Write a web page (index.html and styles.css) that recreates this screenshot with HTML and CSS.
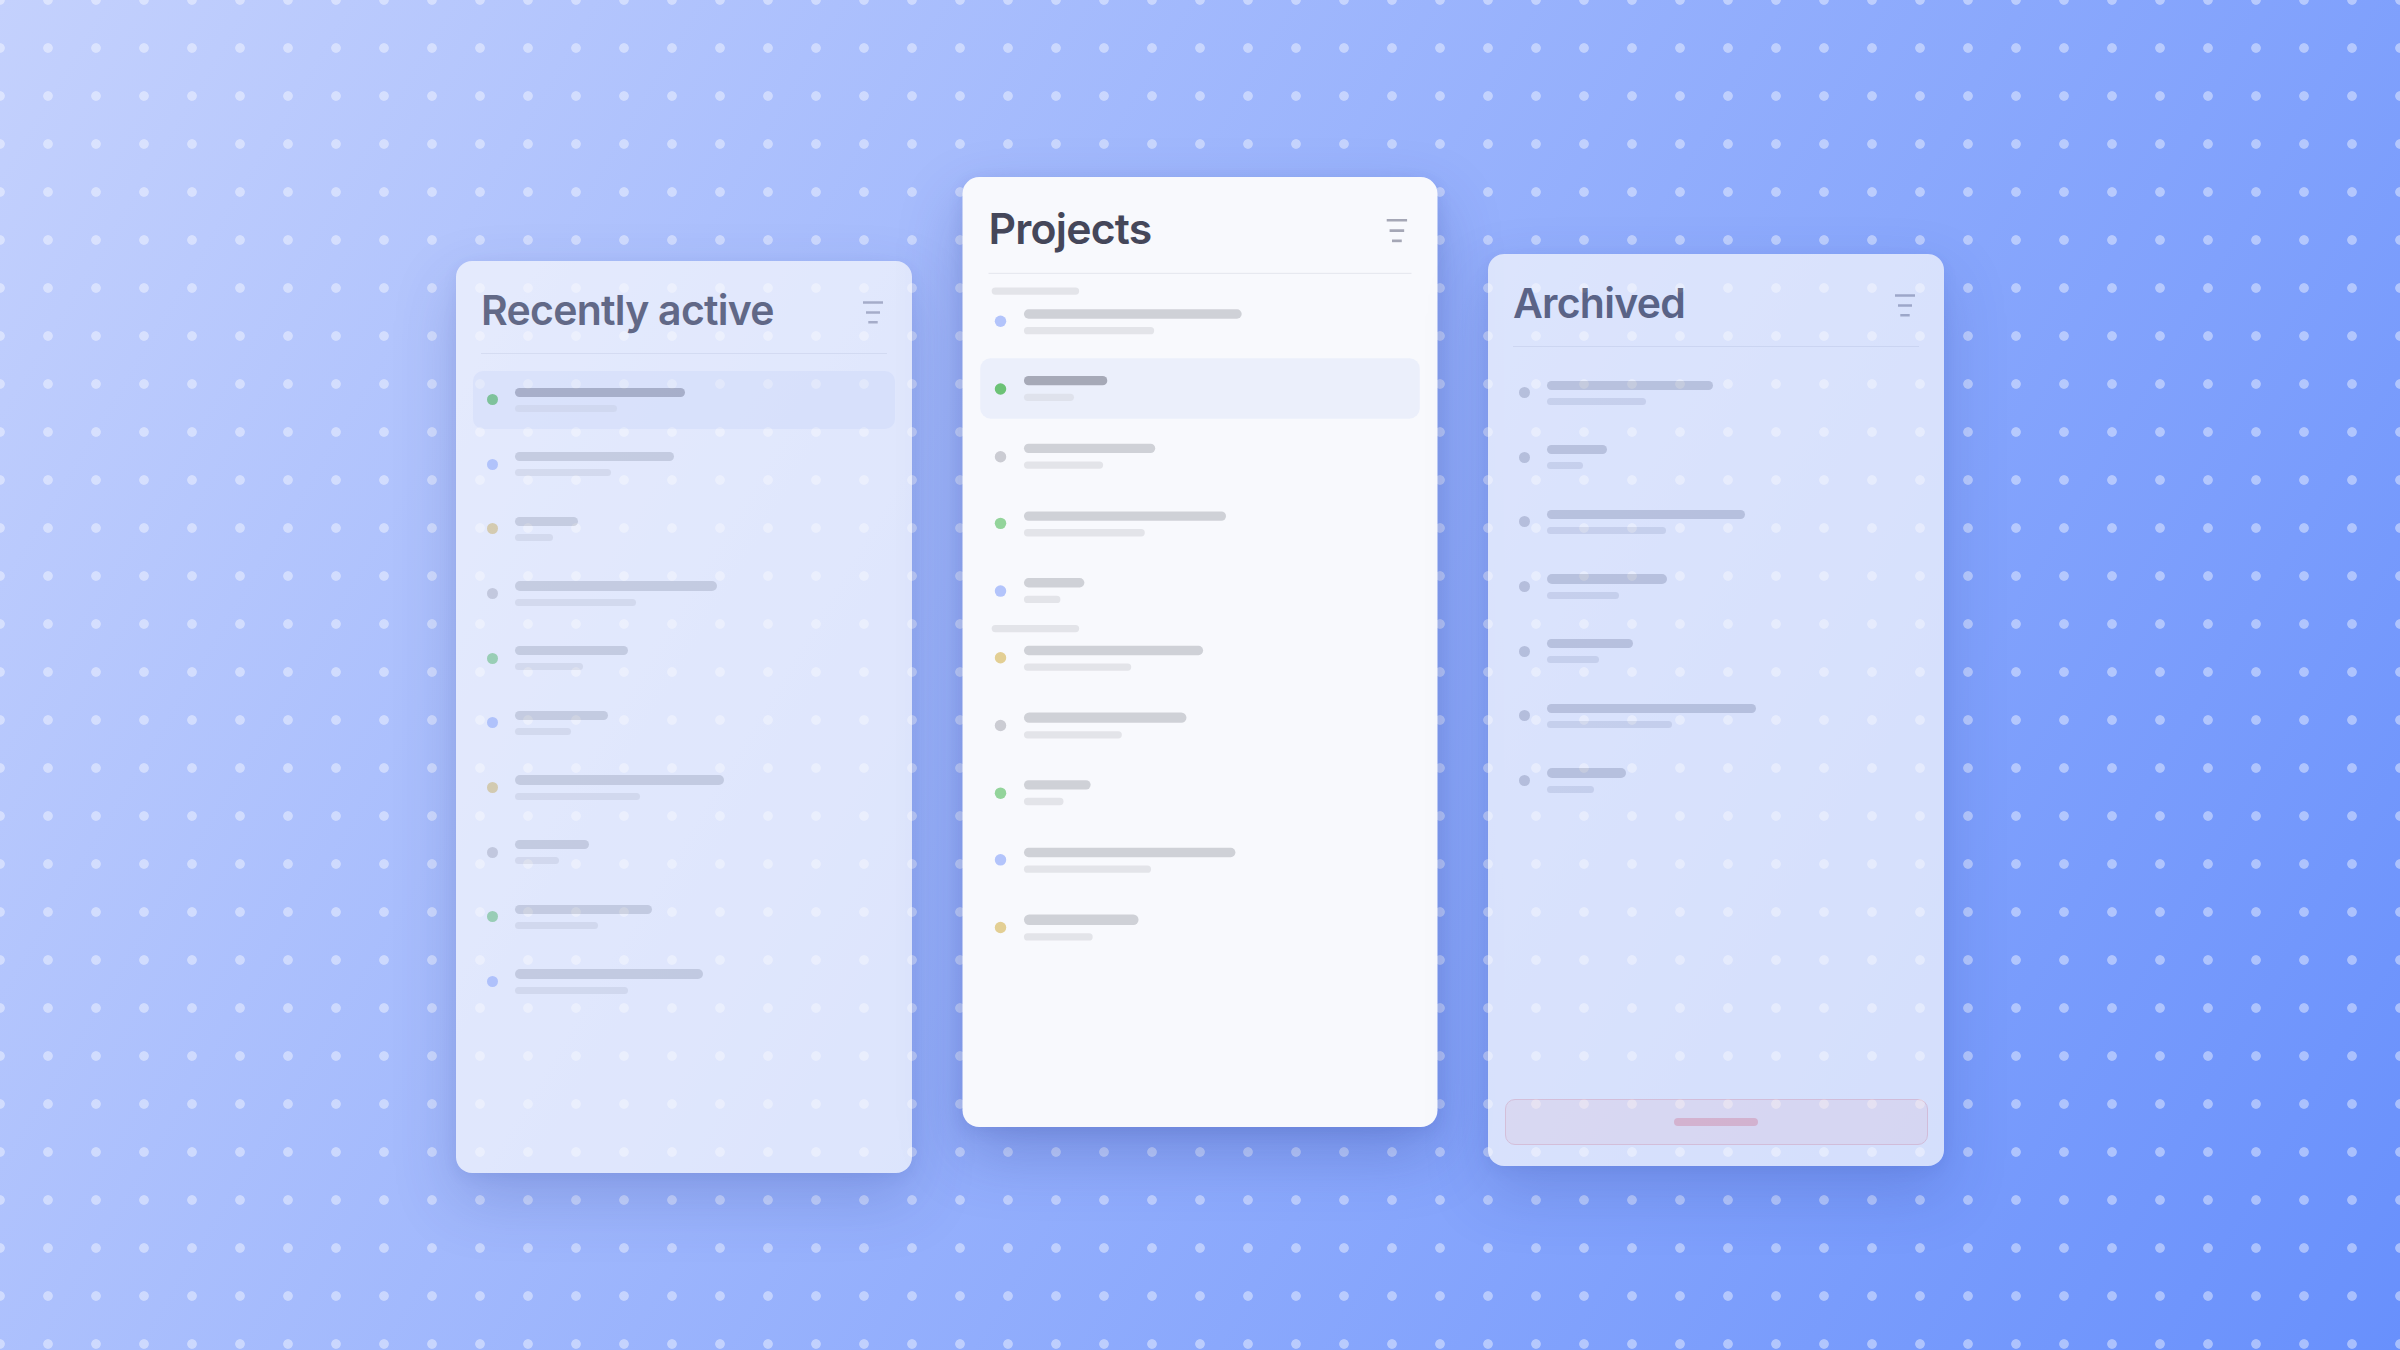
FILE: index.html
```html
<!DOCTYPE html>
<html lang="en">
<head>
    <meta charset="UTF-8">
    <meta name="viewport" content="width=device-width, initial-scale=1.0">
    <title>Boards</title>
    <link rel="stylesheet" href="styles.css">
</head>
<body>
    <div class="board">

        <!-- recently active -->
        <section class="card side left">
            <header class="card-head">
                <h2>Recently active</h2>
                <button class="filter" aria-label="Filter">
                    <svg width="20" height="23" viewBox="0 0 20 23"><path d="M0 1.5h20M3 11.5h14M5.3 21.3h9.4"/></svg>
                </button>
            </header>
            <div class="list">
                <div class="row active"><span class="dot green"></span><div class="lines"><span class="bar" style="width:170px"></span><span class="bar sub" style="width:102px"></span></div></div>
                <div class="row"><span class="dot blue"></span><div class="lines"><span class="bar" style="width:159px"></span><span class="bar sub" style="width:96px"></span></div></div>
                <div class="row"><span class="dot yellow"></span><div class="lines"><span class="bar" style="width:63px"></span><span class="bar sub" style="width:38px"></span></div></div>
                <div class="row"><span class="dot gray"></span><div class="lines"><span class="bar" style="width:202px"></span><span class="bar sub" style="width:121px"></span></div></div>
                <div class="row"><span class="dot green"></span><div class="lines"><span class="bar" style="width:113px"></span><span class="bar sub" style="width:68px"></span></div></div>
                <div class="row"><span class="dot blue"></span><div class="lines"><span class="bar" style="width:93px"></span><span class="bar sub" style="width:56px"></span></div></div>
                <div class="row"><span class="dot yellow"></span><div class="lines"><span class="bar" style="width:209px"></span><span class="bar sub" style="width:125px"></span></div></div>
                <div class="row"><span class="dot gray"></span><div class="lines"><span class="bar" style="width:74px"></span><span class="bar sub" style="width:44px"></span></div></div>
                <div class="row"><span class="dot green"></span><div class="lines"><span class="bar" style="width:137px"></span><span class="bar sub" style="width:83px"></span></div></div>
                <div class="row"><span class="dot blue"></span><div class="lines"><span class="bar" style="width:188px"></span><span class="bar sub" style="width:113px"></span></div></div>
            </div>
        </section>

        <!-- projects -->
        <section class="card front">
            <header class="card-head">
                <h2>Projects</h2>
                <button class="filter" aria-label="Filter">
                    <svg width="20" height="23" viewBox="0 0 20 23"><path d="M0 1.5h20M3 11.5h14M5.3 21.3h9.4"/></svg>
                </button>
            </header>
            <div class="list">
                <span class="group"></span>
                <div class="row"><span class="dot blue"></span><div class="lines"><span class="bar" style="width:209px"></span><span class="bar sub" style="width:125px"></span></div></div>
                <div class="row active"><span class="dot green"></span><div class="lines"><span class="bar" style="width:80px"></span><span class="bar sub" style="width:48px"></span></div></div>
                <div class="row"><span class="dot gray"></span><div class="lines"><span class="bar" style="width:126px"></span><span class="bar sub" style="width:76px"></span></div></div>
                <div class="row"><span class="dot green"></span><div class="lines"><span class="bar" style="width:194px"></span><span class="bar sub" style="width:116px"></span></div></div>
                <div class="row"><span class="dot blue"></span><div class="lines"><span class="bar" style="width:58px"></span><span class="bar sub" style="width:35px"></span></div></div>
                <span class="group"></span>
                <div class="row"><span class="dot yellow"></span><div class="lines"><span class="bar" style="width:172px"></span><span class="bar sub" style="width:103px"></span></div></div>
                <div class="row"><span class="dot gray"></span><div class="lines"><span class="bar" style="width:156px"></span><span class="bar sub" style="width:94px"></span></div></div>
                <div class="row"><span class="dot green"></span><div class="lines"><span class="bar" style="width:64px"></span><span class="bar sub" style="width:38px"></span></div></div>
                <div class="row"><span class="dot blue"></span><div class="lines"><span class="bar" style="width:203px"></span><span class="bar sub" style="width:122px"></span></div></div>
                <div class="row"><span class="dot yellow"></span><div class="lines"><span class="bar" style="width:110px"></span><span class="bar sub" style="width:66px"></span></div></div>
            </div>
        </section>

        <!-- archived -->
        <section class="card side right">
            <header class="card-head">
                <h2>Archived</h2>
                <button class="filter" aria-label="Filter">
                    <svg width="20" height="23" viewBox="0 0 20 23"><path d="M0 1.5h20M3 11.5h14M5.3 21.3h9.4"/></svg>
                </button>
            </header>
            <div class="list">
                <div class="row"><span class="dot gray"></span><div class="lines"><span class="bar" style="width:166px"></span><span class="bar sub" style="width:99px"></span></div></div>
                <div class="row"><span class="dot gray"></span><div class="lines"><span class="bar" style="width:60px"></span><span class="bar sub" style="width:36px"></span></div></div>
                <div class="row"><span class="dot gray"></span><div class="lines"><span class="bar" style="width:198px"></span><span class="bar sub" style="width:119px"></span></div></div>
                <div class="row"><span class="dot gray"></span><div class="lines"><span class="bar" style="width:120px"></span><span class="bar sub" style="width:72px"></span></div></div>
                <div class="row"><span class="dot gray"></span><div class="lines"><span class="bar" style="width:86px"></span><span class="bar sub" style="width:52px"></span></div></div>
                <div class="row"><span class="dot gray"></span><div class="lines"><span class="bar" style="width:209px"></span><span class="bar sub" style="width:125px"></span></div></div>
                <div class="row"><span class="dot gray"></span><div class="lines"><span class="bar" style="width:79px"></span><span class="bar sub" style="width:47px"></span></div></div>
            </div>
            <button class="danger"><span></span></button>
        </section>

    </div>
</body>
</html>
```

FILE: styles.css
```css
html, body {
    margin: 0;
    height: 100%;
}
body {
    font-family: Inter, "Noto Sans", sans-serif;
    overflow: hidden;
    background-color: #96b0fc;
    background-image:
        radial-gradient(circle, rgba(255, 255, 255, 0.42) 4.4px, rgba(255, 255, 255, 0) 5.2px),
        linear-gradient(121deg, #c4d1fd 0%, #6890fc 100%);
    background-size: 48px 48px, 100% 100%;
    background-position: -24px -24px, 0 0;
}

.board {
    display: flex;
    justify-content: center;
    align-items: flex-start;
    gap: 60px;
    padding-top: 177px;
}

/* cards */
.card {
    width: 456px;
    height: 912px;
    box-sizing: border-box;
    display: flex;
    flex-direction: column;
    background: #f8f9fd;
    border-radius: 16px;
    box-shadow: 0 26px 60px rgba(34, 52, 140, 0.26), 0 4px 14px rgba(34, 52, 140, 0.10);
}
.card.side {
    opacity: 0.72;
}
.card.left { margin-top: 84px; }
.card.right { margin-top: 77px; }
.card.front {
    transform: scale(1.0417);
    transform-origin: top center;
}

.card-head {
    display: flex;
    align-items: center;
    justify-content: space-between;
    margin: 0 25px;
    padding: 24.6px 0 18.4px;
    border-bottom: 1px solid #e4e6ee;
}
.card-head h2 {
    margin: 0;
    font-size: 41px;
    line-height: 49px;
    font-weight: 600;
    letter-spacing: -0.018em;
    color: #45475a;
}
.filter {
    width: 28px;
    height: 28px;
    margin-top: 4px;
    padding: 0;
    border: none;
    background: none;
    display: flex;
    align-items: center;
    justify-content: center;
}
.filter svg {
    stroke: #a5a7b6;
    stroke-width: 2.5;
    fill: none;
}

/* rows */
.list {
    flex: 1;
    display: flex;
    flex-direction: column;
    padding: 16.7px 17px 0;
}
.row {
    height: 58px;
    flex: none;
    display: flex;
    align-items: center;
    gap: 17.3px;
    padding: 0 14px;
    margin-bottom: 6.67px;
    border-radius: 10px;
}
.row.active {
    background: #ebeffb;
}
.group {
    display: block;
    width: 84px;
    height: 7px;
    margin: -3.2px 0 -3.8px 11px;
    border-radius: 4px;
    background: #e3e4e9;
    flex: none;
}
.dot {
    width: 11px;
    height: 11px;
    border-radius: 50%;
    flex: none;
}
.dot.green { background: #93d49b; }
.dot.blue { background: #b3c4fb; }
.dot.yellow { background: #e3cf94; }
.dot.gray { background: #cbccd3; }
.row.active .dot.green { background: #6cc276; }

.lines {
    display: flex;
    flex-direction: column;
    gap: 8px;
}
.bar {
    display: block;
    height: 9.3px;
    border-radius: 5px;
    background: #cfd1d7;
}
.bar.sub {
    height: 7px;
    background: #e3e4e9;
}
.row.active .bar { background: #a6a9b7; }
.row.active .bar.sub { background: #dfe2ec; }

.right .dot.gray { background: #c4c6d0; }
.right .bar { background: #c8cad3; }
.right .bar.sub { background: #dcdee7; }

/* archive footer */
.danger {
    margin: 0 16.5px 21.5px;
    height: 45.5px;
    border: 1px solid #f3c9cc;
    border-radius: 10px;
    background: #f9ecef;
    display: flex;
    align-items: center;
    justify-content: center;
    padding: 0;
}
.danger span {
    width: 84px;
    height: 8px;
    border-radius: 4px;
    background: #f3b9bf;
}
```
